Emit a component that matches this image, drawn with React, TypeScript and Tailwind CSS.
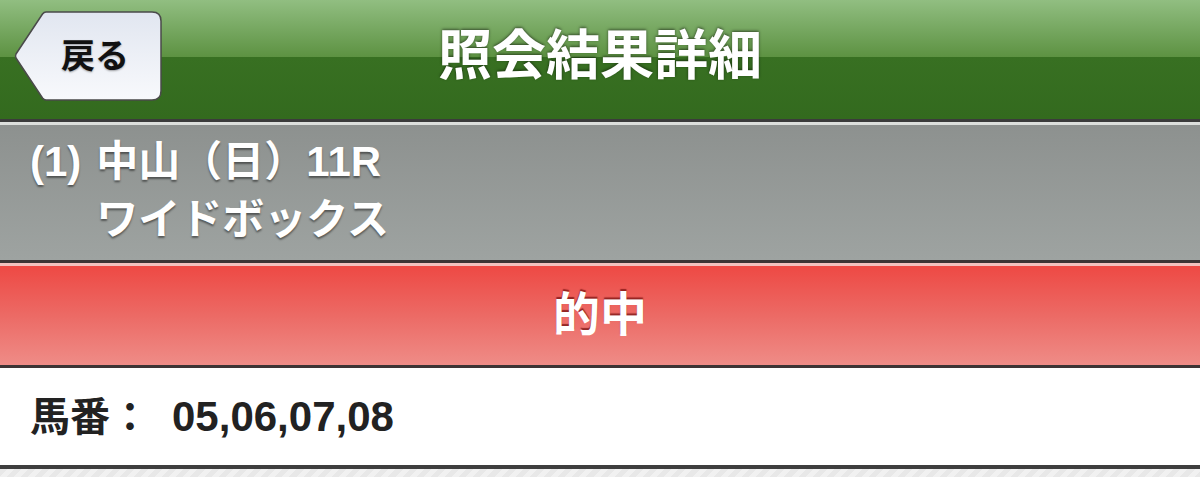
const jp = "font-['Liberation_Sans','Noto_Sans_CJK_JP',sans-serif]";

function BackButton() {
  return (
    <button type="button" className="relative ml-[14px] mt-[11px] h-[90px] w-[148px]">
      <svg className="absolute inset-0" width="148" height="90" viewBox="0 0 148 90" aria-hidden="true">
        <defs>
          <linearGradient id="backFill" x1="0" y1="0" x2="0" y2="1">
            <stop offset="0" stopColor="#e1e6f0" />
            <stop offset="1" stopColor="#f8f9fc" />
          </linearGradient>
        </defs>
        <path
          d="M32 1 H138 Q147 1 147 10 V80 Q147 89 138 89 H32 Q30 89 28.5 87 L2 47 Q1 45 2 43 L28.5 3 Q30 1 32 1 Z"
          fill="url(#backFill)"
          stroke="#4a4a4a"
          strokeWidth="1.5"
        />
      </svg>
      <span
        className={`relative block pl-[47px] pr-[30px] text-left text-[34px] font-bold leading-[90px] text-[#111] ${jp} [text-shadow:0_1px_2px_rgba(0,0,0,0.35)]`}
      >
        戻る
      </span>
    </button>
  );
}

export default function App() {
  return (
    <div className={`w-[1200px] h-[477px] overflow-hidden ${jp}`}>
      <header className="grid h-[119px] grid-cols-[1fr_auto_1fr] bg-[linear-gradient(to_bottom,#91be81_0px,#5d9242_57px,#387022_57px,#336a1e_119px)]">
        <div className="flex items-start">
          <BackButton />
        </div>
        <h1 className="pt-[1px] text-[54px] font-bold leading-[110px] text-white [text-shadow:0_-1px_3px_rgba(0,0,0,0.55)]">
          照会結果詳細
        </h1>
        <div />
      </header>
      <div className="h-[3px] bg-[#3b3b3b]" />
      <div className="h-[3px] bg-[#dcdfdc]" />

      <section className="flex h-[135px] pl-[30px] pt-[8px] bg-[linear-gradient(to_bottom,#8d918f,#9ea3a1)] text-[42px] font-bold leading-[58px] text-white [text-shadow:0_2px_2px_rgba(0,0,0,0.45)]">
        <span>(1)</span>
        <div className="ml-[15px]">
          <p>中山（日）11R</p>
          <p>ワイドボックス</p>
        </div>
      </section>
      <div className="h-[3px] bg-[#3d3435]" />
      <div className="h-[3px] bg-[#f3c1be]" />

      <section className="flex h-[99px] items-center justify-center bg-[linear-gradient(to_bottom,#ee4944,#ec6a65_50%,#ef8c87)]">
        <h2 className="text-[47px] font-bold text-white [text-shadow:0_-2px_1px_rgba(110,10,10,0.7)]">的中</h2>
      </section>
      <div className="h-[3px] bg-[#3d3435]" />

      <section className="flex h-[97px] items-center bg-white pl-[30px] text-[#222]">
        <span className="text-[40px] font-bold">馬番：</span>
        <span className="ml-[22px] text-[42px] font-bold">05,06,07,08</span>
      </section>
      <div className="h-[4px] bg-[#3e3e3e]" />
      <div className="h-[20px] bg-[repeating-linear-gradient(135deg,#e8e8e8_0px,#e8e8e8_5px,#f1f1f1_5px,#f1f1f1_10px)]" />
    </div>
  );
}
